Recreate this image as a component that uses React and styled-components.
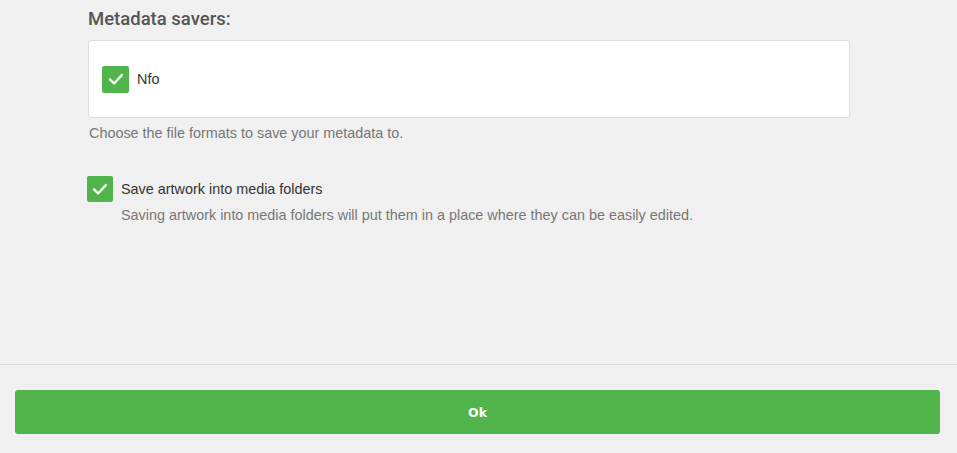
import styled, { createGlobalStyle } from "styled-components"

const GlobalStyle = createGlobalStyle`
    html, body {
        margin: 0;
        background: #f0f0f0;
        font-family: "Liberation Sans", Arial, sans-serif;
    }
`

const Page = styled.div`
    height: 453px;
    display: flex;
    flex-direction: column;
    background: #f0f0f0;
`

const Content = styled.div`
    flex: 1;
    padding: 8px 0 0 88px;
    width: 762px;
`

const Heading = styled.h2`
    margin: 0 0 10px;
    font-family: Roboto, "Noto Sans", sans-serif;
    font-size: 18.5px;
    font-weight: 500;
    color: #555;
    line-height: 22px;
`

const Panel = styled.div`
    background: #fff;
    border: 1px solid #ddd;
    border-radius: 3px;
    height: 76px;
    display: flex;
    align-items: center;
    padding-left: 13px;
`

const Row = styled.label`
    display: flex;
    align-items: center;
    gap: ${(p) => p.gap || 8}px;
    margin-left: ${(p) => p.shift || 0}px;
    font-size: 14.4px;
    color: #333;
`

const Box = styled.span`
    width: ${(p) => p.size}px;
    height: ${(p) => p.size}px;
    border-radius: 2px;
    background: #52b54b;
    display: flex;
    align-items: center;
    justify-content: center;
    flex-shrink: 0;
`

const Hint = styled.p`
    margin: ${(p) => p.margin};
    font-size: 14.4px;
    color: #777;
    line-height: 17px;
`

const Setting = styled.div`
    margin-top: 34px;
`

const Footer = styled.div`
    border-top: 1px solid #dcdcdc;
    padding: 25px 17px 19px 15px;
`

const OkButton = styled.button`
    width: 100%;
    height: 44px;
    border: 0;
    border-radius: 3px;
    background: #52b54b;
    color: #fff;
    font-family: "DejaVu Sans", sans-serif;
    font-weight: 700;
    font-size: 12.5px;
`

const Check = () => (
    <svg width="18" height="18" viewBox="0 0 24 24" fill="none" stroke="#fff" strokeWidth="3" strokeLinecap="round" strokeLinejoin="round">
        <polyline points="4 12.5 9.5 18 20 6.5" />
    </svg>
)

const CheckBox = ({ size, label, gap, shift }) => (
    <Row gap={gap} shift={shift}>
        <Box size={size}>
            <Check />
        </Box>
        {label}
    </Row>
)

export default function App() {
    return (
        <Page>
            <GlobalStyle />
            <Content>
                <Heading>Metadata savers:</Heading>
                <Panel>
                    <CheckBox size={27} gap={8} label="Nfo" />
                </Panel>
                <Hint margin="7px 0 0 1px">Choose the file formats to save your metadata to.</Hint>
                <Setting>
                    <CheckBox size={26} gap={8} shift={-1} label="Save artwork into media folders" />
                    <Hint margin="5px 0 0 33px">Saving artwork into media folders will put them in a place where they can be easily edited.</Hint>
                </Setting>
            </Content>
            <Footer>
                <OkButton>Ok</OkButton>
            </Footer>
        </Page>
    )
}
